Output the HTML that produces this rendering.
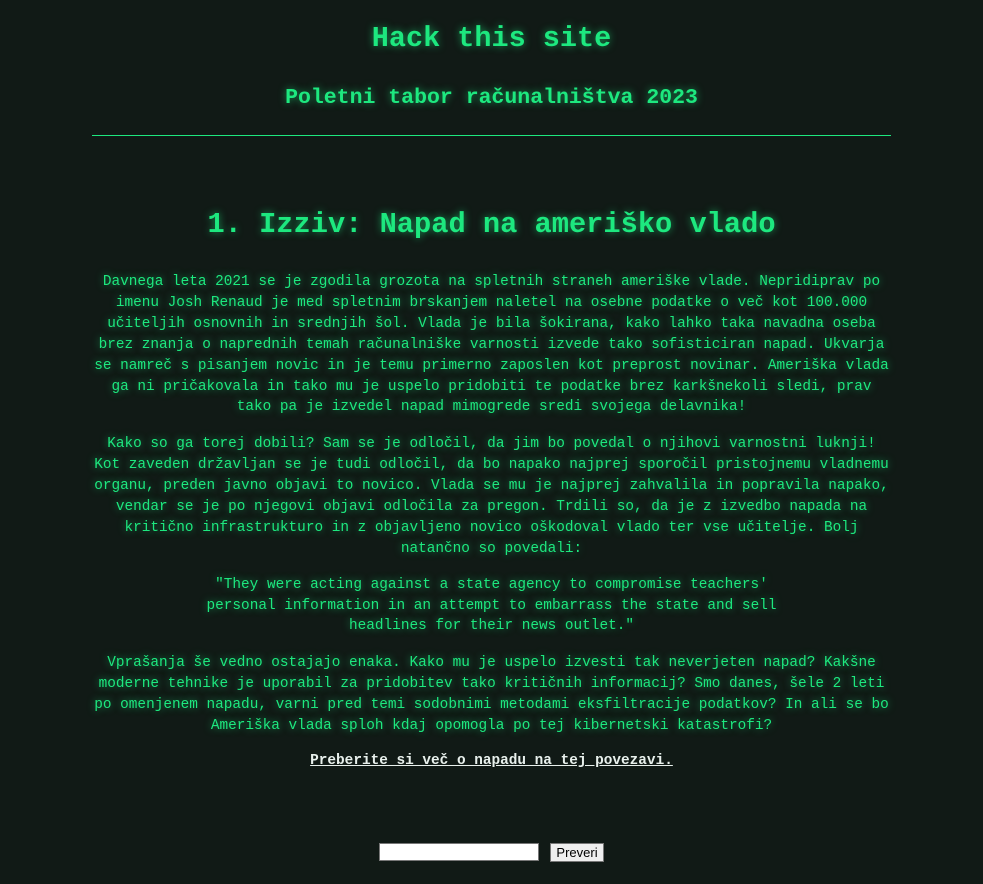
<!DOCTYPE html>
<html><head><meta charset="utf-8"><style>
html,body{margin:0;padding:0;background:#111a16;width:983px;height:884px;overflow:hidden}
body{font-family:"Liberation Mono","DejaVu Sans Mono",monospace;color:#1de87f;text-align:center;position:relative}
.g{text-shadow:0 0 8px rgba(29,232,127,.6)}
.b{position:absolute;left:0;width:983px;white-space:nowrap}
h1,h2,h3{margin:0;font-weight:bold}
.t{font-size:28.5px;top:22px}
.s{font-size:21.5px;top:86px}
.hr{position:absolute;left:92px;top:135px;width:799px;height:1px;background:#1de87f}
.h{font-size:28.7px;top:208px}
.p{font-size:14.4px;line-height:20.9px}
a{color:#e8f0ec;text-decoration:underline;font-weight:bold}
input{position:absolute;top:843px;left:379px;width:158px;height:16px;border:1px solid #777;background:#fff;padding:0;margin:0}
button{position:absolute;top:843px;left:550px;width:54px;height:19px;font:13px "Liberation Sans",sans-serif;background:#efefef;border:1px solid #777;padding:0;margin:0}
</style></head><body>
<h1 class="b t g">Hack this site</h1>
<h2 class="b s g">Poletni tabor računalništva 2023</h2>
<div class="hr"></div>
<h3 class="b h g">1. Izziv: Napad na ameriško vlado</h3>
<div class="b p g" style="top:272px">Davnega leta 2021 se je zgodila grozota na spletnih straneh ameriške vlade. Nepridiprav po<br>imenu Josh Renaud je med spletnim brskanjem naletel na osebne podatke o več kot 100.000<br>učiteljih osnovnih in srednjih šol. Vlada je bila šokirana, kako lahko taka navadna oseba<br>brez znanja o naprednih temah računalniške varnosti izvede tako sofisticiran napad. Ukvarja<br>se namreč s pisanjem novic in je temu primerno zaposlen kot preprost novinar. Ameriška vlada<br>ga ni pričakovala in tako mu je uspelo pridobiti te podatke brez karkšnekoli sledi, prav<br>tako pa je izvedel napad mimogrede sredi svojega delavnika!</div>
<div class="b p g" style="top:434px">Kako so ga torej dobili? Sam se je odločil, da jim bo povedal o njihovi varnostni luknji!<br>Kot zaveden državljan se je tudi odločil, da bo napako najprej sporočil pristojnemu vladnemu<br>organu, preden javno objavi to novico. Vlada se mu je najprej zahvalila in popravila napako,<br>vendar se je po njegovi objavi odločila za pregon. Trdili so, da je z izvedbo napada na<br>kritično infrastrukturo in z objavljeno novico oškodoval vlado ter vse učitelje. Bolj<br>natančno so povedali:</div>
<div class="b p g" style="top:575px;line-height:20.5px">"They were acting against a state agency to compromise teachers'<br>personal information in an attempt to embarrass the state and sell<br>headlines for their news outlet."</div>
<div class="b p g" style="top:653px">Vprašanja še vedno ostajajo enaka. Kako mu je uspelo izvesti tak neverjeten napad? Kakšne<br>moderne tehnike je uporabil za pridobitev tako kritičnih informacij? Smo danes, šele 2 leti<br>po omenjenem napadu, varni pred temi sodobnimi metodami eksfiltracije podatkov? In ali se bo<br>Ameriška vlada sploh kdaj opomogla po tej kibernetski katastrofi?</div>
<div class="b p" style="top:751px"><a>Preberite si več o napadu na tej povezavi.</a></div>
<input type="text"><button>Preveri</button>
</body></html>
